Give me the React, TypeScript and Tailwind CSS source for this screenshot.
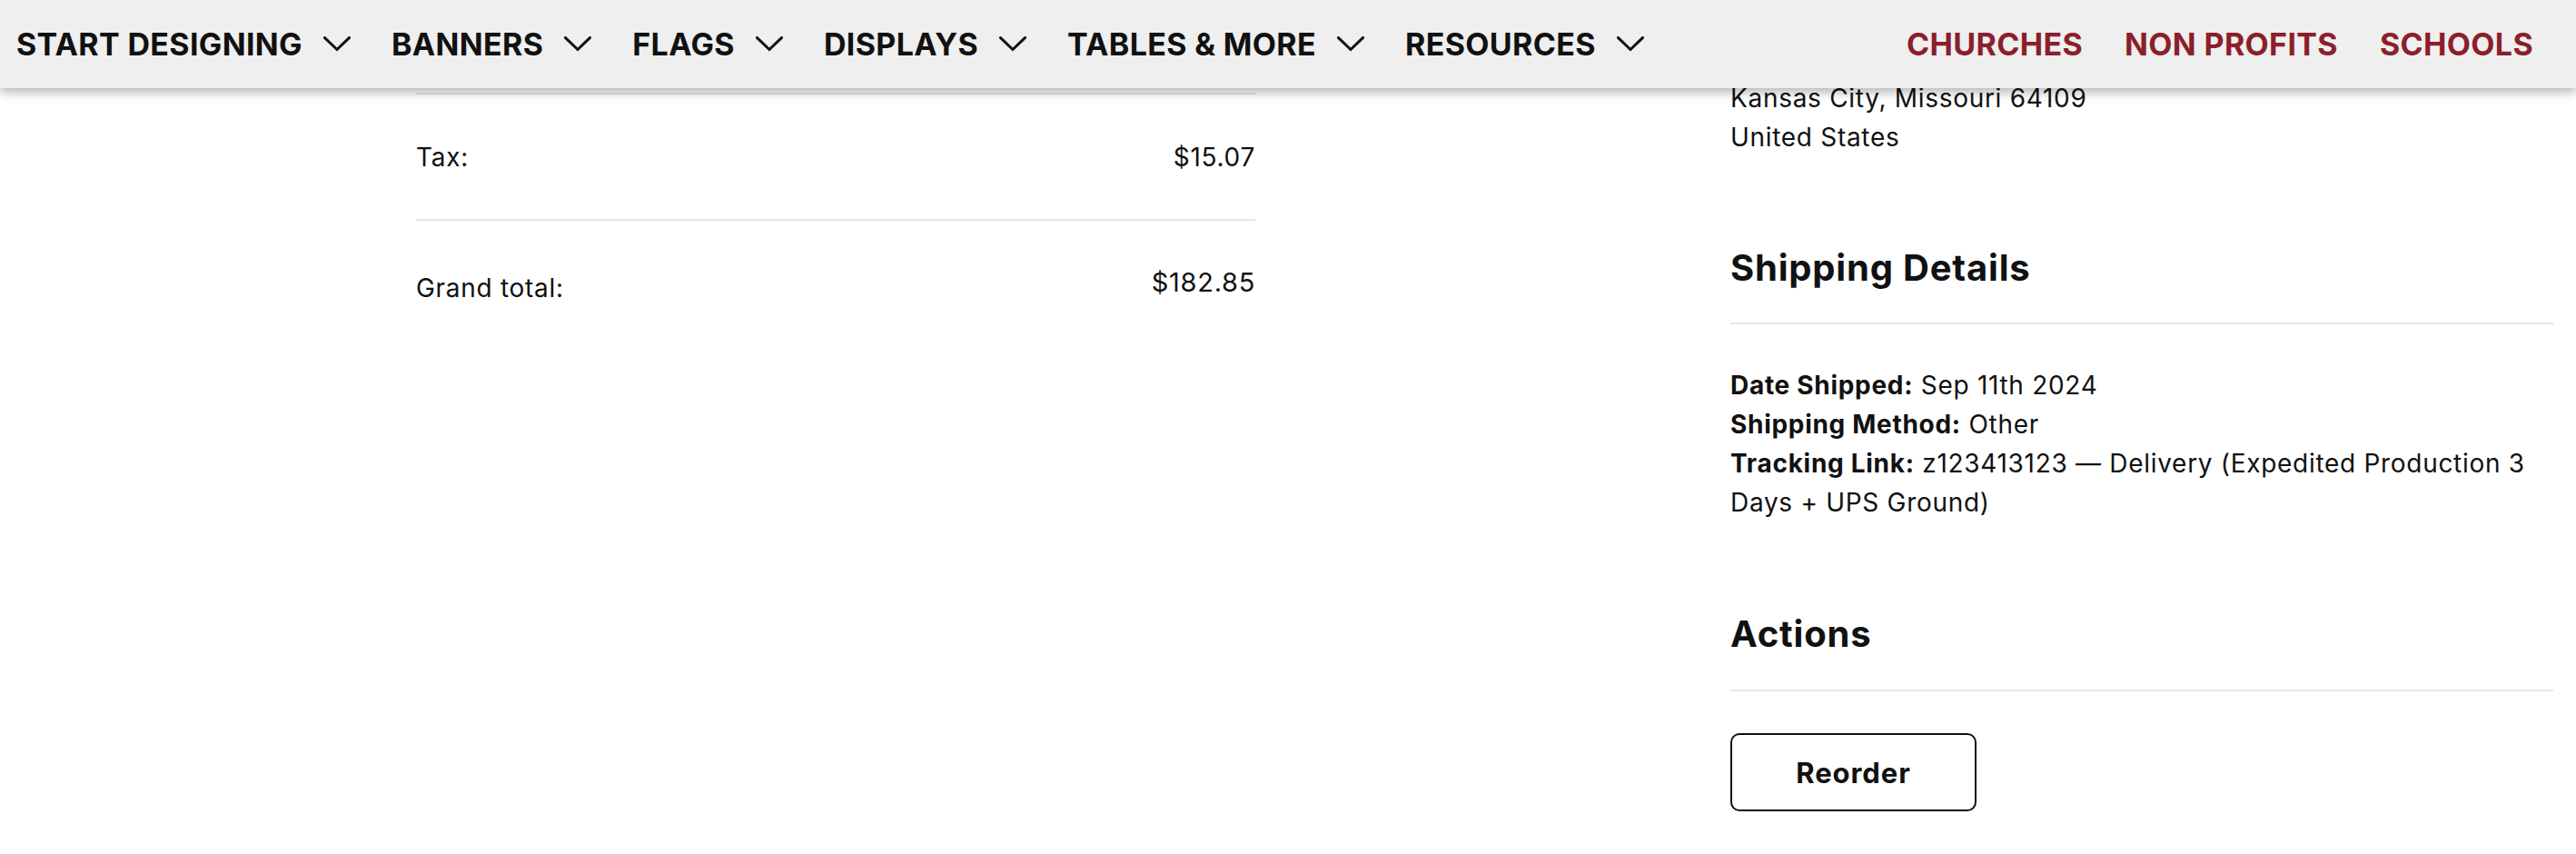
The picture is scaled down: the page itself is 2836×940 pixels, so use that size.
import React from 'react';

const navItems = ['START DESIGNING', 'BANNERS', 'FLAGS', 'DISPLAYS', 'TABLES & MORE', 'RESOURCES'];
const sideLinks = ['CHURCHES', 'NON PROFITS', 'SCHOOLS'];

const Chevron = () => (
  <svg width="30" height="17" viewBox="0 0 30 17" fill="none" className="shrink-0">
    <path d="M1.5 1.5 L15 14.5 L28.5 1.5" stroke="#111" strokeWidth="3" strokeLinecap="square" />
  </svg>
);

const Header: React.FC = () => (
  <header className="relative z-10 flex h-[97px] items-center justify-between bg-[#efefef] pl-[18px] pr-[47px] shadow-[0_5px_10px_rgba(0,0,0,0.28)]">
    <nav className="flex items-center gap-[45px]">
      {navItems.map((item) => (
        <div key={item} className="flex items-center gap-[23px]">
          <span className="text-[34px] font-bold tracking-[0.01em] text-[#111]">{item}</span>
          <Chevron />
        </div>
      ))}
    </nav>
    <div className="flex items-center gap-[46px]">
      {sideLinks.map((link) => (
        <a key={link} className="text-[34px] font-bold tracking-[0.01em] text-[#8b1f2b]">
          {link}
        </a>
      ))}
    </div>
  </header>
);

const Divider = () => <div className="h-[2px] w-full bg-[#e6e6e6]" />;

const OrderTotals: React.FC = () => (
  <div className="mt-[5px] w-[924px] shrink-0 border-t-2 border-[#e6e6e6]">
    <div className="flex justify-between pb-[46px] pt-[48px]">
      <span>Tax:</span>
      <span>$15.07</span>
    </div>
    <Divider />
    <div className="flex items-start justify-between pt-[46px]">
      <span className="mt-[7px]">Grand total:</span>
      <span className="text-[29px]">$182.85</span>
    </div>
  </div>
);

const OrderDetails: React.FC = () => (
  <div className="-mt-[10px] w-[906px] shrink-0">
    {/* Address */}
    <p>Kansas City, Missouri 64109</p>
    <p>United States</p>

    {/* Shipping */}
    <h2 className="mt-[100px] pb-[39px] text-[40px] font-bold leading-[43px] tracking-[0.02em]">Shipping Details</h2>
    <Divider />
    <div className="mt-[46px]">
      <p>
        <span className="font-bold">Date Shipped:</span> Sep 11th 2024
      </p>
      <p>
        <span className="font-bold">Shipping Method:</span> Other
      </p>
      <p>
        <span className="font-bold">Tracking Link:</span> z123413123 — Delivery (Expedited Production 3 Days + UPS Ground)
      </p>
    </div>

    {/* Actions */}
    <h2 className="mt-[101px] pb-[40px] text-[40px] font-bold leading-[43px] tracking-[0.02em]">Actions</h2>
    <Divider />
    <button className="mt-[46px] flex h-[86px] w-[271px] items-center justify-center rounded-[10px] border-2 border-[#111] bg-white text-[31px] font-bold tracking-[0.03em] text-[#111]">
      Reorder
    </button>
  </div>
);

export default function App() {
  return (
    <div className="min-h-screen bg-white font-['Inter',sans-serif] text-[28px] leading-[43px] tracking-[0.025em] text-[#111]">
      <Header />
      <main className="flex gap-[523px] pl-[458px]">
        <OrderTotals />
        <OrderDetails />
      </main>
    </div>
  );
}
